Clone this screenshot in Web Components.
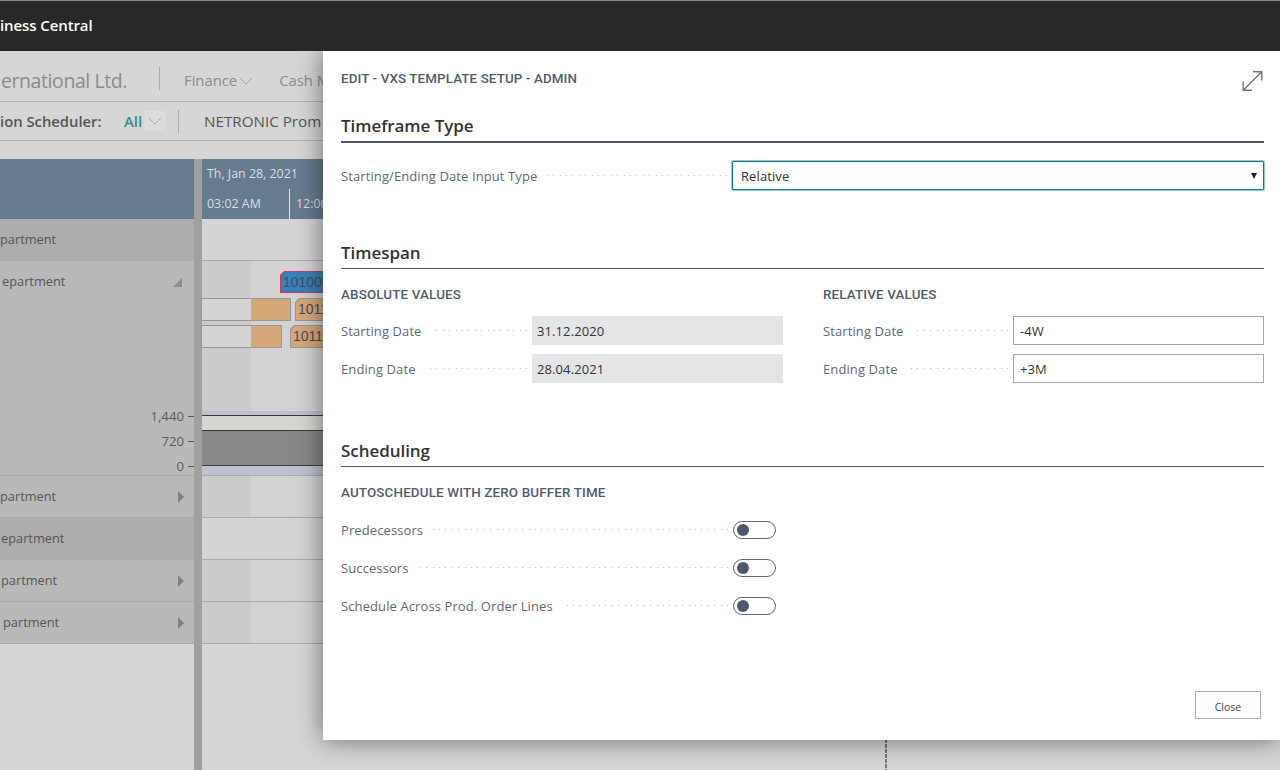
<!DOCTYPE html>
<html>
<head>
<meta charset="utf-8">
<title>VXS Template Setup</title>
<style>
	html, body {
		margin: 0;
		height: 100%;
		overflow: hidden;
		font-family: "Open Sans", "Noto Sans", sans-serif;
	}
</style>
</head>
<body>
<bc-shell>
	<bc-gantt>
		<gantt-row dark label="partment"></gantt-row>
		<gantt-row label="epartment" shift="2" chevron="open" height="215" shaded>
			<gantt-bar slot="bars" left="78" top="10" width="60" height="22" kind="blue" text="101000"></gantt-bar>
			<gantt-bar slot="bars" left="-1" top="37" width="90" height="23" kind="idle" split="49"></gantt-bar>
			<gantt-bar slot="bars" left="93" top="37" width="60" height="23" kind="orange" text="1011"></gantt-bar>
			<gantt-bar slot="bars" left="-1" top="64" width="81" height="23" kind="idle" split="49"></gantt-bar>
			<gantt-bar slot="bars" left="88" top="64" width="60" height="23" kind="orange" text="1011"></gantt-bar>
			<gantt-load slot="load"></gantt-load>
			<load-axis slot="axis"></load-axis>
		</gantt-row>
		<gantt-row label="partment" chevron="closed" shaded></gantt-row>
		<gantt-row dark label="epartment" shift="1"></gantt-row>
		<gantt-row label="partment" shift="1" chevron="closed" shaded></gantt-row>
		<gantt-row label="partment" shift="3" chevron="closed" shaded></gantt-row>
		<gantt-row filler></gantt-row>
	</bc-gantt>
</bc-shell>
<bc-dialog caption="EDIT - VXS TEMPLATE SETUP - ADMIN">
	<form-section title="Timeframe Type" focused>
		<form-field label="Starting/Ending Date Input Type" label-width="391" style="margin-top:18px">
			<bc-select value="Relative"></bc-select>
		</form-field>
	</form-section>
	<form-section title="Timespan" style="margin-top:48px">
		<field-columns>
			<field-group caption="ABSOLUTE VALUES" gap="11">
				<form-field label="Starting Date" label-width="191"><bc-input readonly value="31.12.2020"></bc-input></form-field>
				<form-field label="Ending Date" label-width="191"><bc-input readonly value="28.04.2021"></bc-input></form-field>
			</field-group>
			<field-group caption="RELATIVE VALUES" gap="11">
				<form-field label="Starting Date" label-width="190"><bc-input value="-4W"></bc-input></form-field>
				<form-field label="Ending Date" label-width="190"><bc-input value="+3M"></bc-input></form-field>
			</field-group>
		</field-columns>
	</form-section>
	<form-section title="Scheduling" style="margin-top:53px">
		<field-group caption="AUTOSCHEDULE WITH ZERO BUFFER TIME" gap="12">
			<form-field label="Predecessors" label-width="392"><bc-toggle></bc-toggle></form-field>
			<form-field label="Successors" label-width="392"><bc-toggle></bc-toggle></form-field>
			<form-field label="Schedule Across Prod. Order Lines" label-width="392"><bc-toggle></bc-toggle></form-field>
		</field-group>
	</form-section>
</bc-dialog>

<script>
const chevron = /*html*/`<svg width="14" height="8" viewBox="0 0 14 8" fill="none" stroke="currentColor" stroke-width="1"><path d="M1 1l6 6 6-6"/></svg>`

class BcShell extends HTMLElement {
	constructor() {
		super()
		this.attachShadow({mode:'open'})
		this.shadowRoot.innerHTML = /*html*/`
		<style>
			:host {
				display: flex;
				flex-direction: column;
				height: 770px;
				background: #d6d6d6;
				color: #555;
				overflow: hidden;
			}
			.top {
				height: 51px;
				box-sizing: border-box;
				flex: none;
				background: #282828;
				border-top: 1px solid #8c8c8c;
				color: #fff;
				font-weight: 600;
				font-size: 15px;
				letter-spacing: -0.1px;
				display: flex;
				align-items: center;
				padding-bottom: 2px;
			}
			.nav, .sub {
				flex: none;
				display: flex;
				align-items: center;
				box-sizing: border-box;
				border-bottom: 1px solid #b2b2b2;
			}
			.nav { height: 51px; color: #8b8b8b; font-size: 14.8px; padding-top: 8px; }
			.sub { height: 39px; font-size: 15.2px; color: #555; }
			.org { font-size: 19.5px; margin: 1px 0 0 1px; width: 158px; white-space: nowrap; letter-spacing: -0.42px; flex: none; }
			.bar { width: 1px; background: #adadad; flex: none; height: 23px; }
			.nav .bar { margin-top: -3px; }
			.sub .bar { margin-left: 12px; }
			.item { display: inline-flex; align-items: center; gap: 2px; white-space: nowrap; }
			.item svg { margin-top: 2px; color: #a8a8a8; }
			.sched { font-weight: 600; font-size: 14.8px; width: 124px; white-space: nowrap; flex: none; }
			.all { color: #2f8f8f; font-weight: 600; font-size: 14.8px; margin-right: 2px; }
			.pick { display: inline-flex; align-items: center; justify-content: center; width: 22px; height: 20px; background: #dcdcdc; color: #b0b0b0; }
			::slotted(*) { margin-top: 18px; }
		</style>
		<div class="top"><span>iness Central</span></div>
		<div class="nav">
			<span class="org">ernational Ltd.</span>
			<span class="bar"></span>
			<span class="item" style="margin-left:24px">Finance ${chevron}</span>
			<span class="item" style="margin-left:26px">Cash M</span>
		</div>
		<div class="sub">
			<span class="sched">ion Scheduler:</span>
			<span class="all">All</span>
			<span class="pick">${chevron}</span>
			<span class="bar"></span>
			<span class="item" style="margin-left:25px">NETRONIC Prom</span>
		</div>
		<slot></slot>`
	}
}

class BcGantt extends HTMLElement {
	constructor() {
		super()
		this.attachShadow({mode:'open'})
		this.shadowRoot.innerHTML = /*html*/`
		<style>
			:host {
				display: flex;
				flex-direction: column;
				flex: 1;
				min-height: 0;
			}
			.head {
				height: 60px;
				flex: none;
				display: grid;
				grid-template-columns: 194px 8px 1fr;
				background: #657b90;
				color: #d9dfe4;
				font-size: 12.4px;
			}
			.split { background: #a0a0a0; }
			.time { display: flex; flex-direction: column; }
			.date { height: 30px; line-height: 29px; padding-left: 5px; }
			.ticks { display: flex; height: 30px; line-height: 29px; }
			.ticks span { width: 88px; padding-left: 5px; box-sizing: border-box; border-right: 1px solid #dfe4e8; }
			.ticks span + span { border: 0; padding-left: 6px; }
		</style>
		<div class="head">
			<div></div><div class="split"></div>
			<div class="time">
				<div class="date">Th, Jan 28, 2021</div>
				<div class="ticks"><span>03:02 AM</span><span>12:00</span></div>
			</div>
		</div>
		<slot></slot>`
	}
}

class GanttRow extends HTMLElement {
	constructor() {
		super()
		this.attachShadow({mode:'open'})
		const open = this.getAttribute('chevron') === 'open'
		const closed = this.getAttribute('chevron') === 'closed'
		this.shadowRoot.innerHTML = /*html*/`
		<style>
			:host {
				display: grid;
				grid-template-columns: 194px 8px 1fr;
				height: ${this.getAttribute('height') || 42}px;
				flex: none;
				box-sizing: border-box;
				font-size: 12.8px;
				color: #555;
			}
			:host([filler]) { flex: 1; height: auto; }
			.left {
				background: #b9b9b9;
				border-bottom: 1px solid #a9a9a9;
				box-sizing: border-box;
				position: relative;
				display: flex;
				flex-direction: column;
			}
			:host([dark]) .left { background: #adadad; border-color: #adadad; }
			:host([filler]) .left { background: #d6d6d6; border: 0; }
			:host([filler]) .right {
				border: 0;
				background: repeating-linear-gradient(180deg, #777 0 4px, transparent 4px 5px) 683px 0 / 2px 100% no-repeat, #d6d6d6;
			}
			.line { height: 41px; flex: none; display: flex; align-items: center; justify-content: space-between; padding-right: 9px; white-space: nowrap; }
			.line span { margin: -2px 0 0 ${this.getAttribute('shift') || 0}px; }
			.split { background: #a0a0a0; }
			.right {
				background: #d4d4d4;
				border-bottom: 1px solid #a9a9a9;
				box-sizing: border-box;
				display: flex;
				flex-direction: column;
				position: relative;
			}
			:host([shaded]) .right { background: linear-gradient(90deg, #cbcbcb 49px, #d3d3d3 49px); }
			.bars { flex: 1; position: relative; }
			.axis { margin-top: auto; }
		</style>
		<div class="left">
			${this.hasAttribute('filler') ? '' : /*html*/`<div class="line">
				<span>${this.getAttribute('label')}</span>
				${closed ? `<svg width="8" height="12" viewBox="0 0 8 12"><path d="M1 0l6 6-6 6z" fill="#808080"/></svg>` : ''}
				${open ? `<svg width="12" height="12" viewBox="0 0 12 12" style="margin-right:1px"><path d="M10 2v9H1z" fill="#8c8c8c"/></svg>` : ''}
			</div>`}
			<div class="axis"><slot name="axis"></slot></div>
		</div>
		<div class="split"></div>
		<div class="right">
			<div class="bars"><slot name="bars"></slot></div>
			<slot name="load"></slot>
		</div>`
	}
}

class GanttBar extends HTMLElement {
	constructor() {
		super()
		this.attachShadow({mode:'open'})
		const get = n => this.getAttribute(n)
		const kind = get('kind')
		const split = get('split')
		const fill = {blue:'#3483bd', orange:'#d6a878', idle:'#d3d3d3'}[kind]
		const edge = {blue:'#d8344a', orange:'#979797', idle:'#979797'}[kind]
		const cut = kind === 'idle' ? 'none' : 'polygon(4px 0, 100% 0, 100% 100%, 0 100%, 0 4px)'
		this.shadowRoot.innerHTML = /*html*/`
		<style>
			:host {
				position: absolute;
				left: ${get('left')}px;
				top: ${get('top')}px;
				width: ${get('width')}px;
				height: ${get('height')}px;
				box-sizing: border-box;
				clip-path: ${cut};
				background: ${edge};
				padding: 1px;
				font: 14px "Liberation Sans", sans-serif;
				color: #4f4a55;
			}
			div {
				height: 100%;
				box-sizing: border-box;
				padding-left: 2px;
				line-height: 20px;
				clip-path: ${cut};
				white-space: nowrap;
				overflow: hidden;
				background: ${split ? `linear-gradient(90deg, ${fill} ${split}px, #d6a878 ${split}px)` : fill};
			}
		</style>
		<div>${get('text') || ''}</div>`
	}
}

class GanttLoad extends HTMLElement {
	constructor() {
		super()
		this.attachShadow({mode:'open'})
		this.shadowRoot.innerHTML = /*html*/`
		<style>
			:host { display: flex; flex-direction: column; height: 64px; flex: none; background: #bcc3cf; }
			.gap { height: 4px; }
			.free { height: 15px; background: #d5d7d0; border-top: 1px solid #3a3a3a; box-sizing: border-box; }
			.used { height: 36px; background: #888; border-top: 1px solid #3a3a3a; border-bottom: 1px solid #3a3a3a; box-sizing: border-box; }
		</style>
		<div class="gap"></div><div class="free"></div><div class="used"></div>`
	}
}

class LoadAxis extends HTMLElement {
	constructor() {
		super()
		this.attachShadow({mode:'open'})
		this.shadowRoot.innerHTML = /*html*/`
		<style>
			:host { display: flex; flex-direction: column; align-items: flex-end; height: 71px; font-size: 13.2px; color: #5c5c5c; }
			div { height: 25px; line-height: 25px; white-space: nowrap; }
			div::after { content: ''; display: inline-block; width: 6px; height: 1px; background: #555; margin-left: 4px; vertical-align: 4px; }
		</style>
		<div>1,440</div><div>720</div><div>0</div>`
	}
}

class BcDialog extends HTMLElement {
	constructor() {
		super()
		this.attachShadow({mode:'open'})
		this.shadowRoot.innerHTML = /*html*/`
		<style>
			:host {
				position: absolute;
				left: 323px;
				top: 51px;
				width: 957px;
				height: 689px;
				box-sizing: border-box;
				background: #fff;
				box-shadow: 0 0 24px rgba(0,0,0,.5);
				display: flex;
				flex-direction: column;
				padding: 0 16px 21px 18px;
				clip-path: inset(0 0 -40px -40px);
			}
			.head {
				height: 60px;
				flex: none;
				display: flex;
				justify-content: space-between;
				align-items: flex-start;
				padding-top: 19px;
				box-sizing: border-box;
			}
			.caption {
				font-family: Roboto, sans-serif;
				font-size: 13.4px;
				font-weight: 500;
				line-height: 18px;
				color: #505c6d;
				letter-spacing: .1px;
			}
			.foot { margin-top: auto; display: flex; justify-content: flex-end; padding-right: 3px; }
			button {
				all: unset;
				width: 66px;
				height: 28px;
				box-sizing: border-box;
				border: 1px solid #ababab;
				background: #fdfdfd;
				text-align: center;
				font: 10.5px "Open Sans", sans-serif;
				line-height: 28px;
				padding-top: 1px;
				color: #444;
			}
		</style>
		<div class="head">
			<span class="caption">${this.getAttribute('caption')}</span>
			<svg width="22" height="22" viewBox="0 0 22 22" fill="none" stroke="#747474" stroke-width="1.4">
				<path d="M1 20.500L19.500 2M11 1.700H19.800V10.500M1.200 11.500V20.300H10"/>
			</svg>
		</div>
		<slot></slot>
		<div class="foot"><button>Close</button></div>`
	}
}

class FormSection extends HTMLElement {
	constructor() {
		super()
		this.attachShadow({mode:'open'})
		this.shadowRoot.innerHTML = /*html*/`
		<style>
			:host { display: block; flex: none; }
			h2 {
				margin: 0;
				height: 30px;
				font-size: 17px;
				font-weight: 600;
				letter-spacing: -.05px;
				line-height: 30px;
				color: #333;
				border-bottom: 1px solid #4d586a;
			}
			:host([focused]) h2 { border-bottom-width: 2px; }
		</style>
		<h2>${this.getAttribute('title')}</h2>
		<slot></slot>`
	}
}

class FieldColumns extends HTMLElement {
	constructor() {
		super()
		this.attachShadow({mode:'open'})
		this.shadowRoot.innerHTML = /*html*/`
		<style>
			:host { display: grid; grid-template-columns: 442px 441px; column-gap: 40px; }
		</style>
		<slot></slot>`
	}
}

class FieldGroup extends HTMLElement {
	constructor() {
		super()
		this.attachShadow({mode:'open'})
		this.shadowRoot.innerHTML = /*html*/`
		<style>
			:host { display: block; }
			h3 {
				margin: 16px 0 ${this.getAttribute('gap') || 12}px;
				height: 20px;
				font-family: Roboto, sans-serif;
				font-size: 13.4px;
				font-weight: 500;
				line-height: 20px;
				letter-spacing: .15px;
				color: #505c6d;
			}
			.rows { display: flex; flex-direction: column; gap: 9px; }
		</style>
		<h3>${this.getAttribute('caption')}</h3>
		<div class="rows"><slot></slot></div>`
	}
}

class FormField extends HTMLElement {
	constructor() {
		super()
		this.attachShadow({mode:'open'})
		this.shadowRoot.innerHTML = /*html*/`
		<style>
			:host { display: flex; align-items: center; height: 29px; font-size: 13px; letter-spacing: .1px; color: #5f6873; }
			.label {
				width: ${this.getAttribute('label-width')}px;
				flex: none;
				display: flex;
				align-items: center;
				gap: 9px;
				padding: 0 5px 0 0;
				box-sizing: border-box;
				white-space: nowrap;
			}
			.dots {
				flex: 1;
				height: 1px;
				background: repeating-linear-gradient(270deg, #b8bcc2 0 1px, transparent 1px 6.4px);
			}
			.value { flex: 1; min-width: 0; }
		</style>
		<div class="label"><span>${this.getAttribute('label')}</span><span class="dots"></span></div>
		<div class="value"><slot></slot></div>`
	}
}

class BcSelect extends HTMLElement {
	constructor() {
		super()
		this.attachShadow({mode:'open'})
		this.shadowRoot.innerHTML = /*html*/`
		<style>
			:host {
				display: flex;
				align-items: center;
				justify-content: space-between;
				height: 29px;
				box-sizing: border-box;
				border: 1px solid #0a7f80;
				box-shadow: 0 0 0 1px #8fcfcf;
				border-radius: 1px;
				padding: 0 6px 0 8px;
				font-size: 13px;
				color: #333;
			}
		</style>
		<span>${this.getAttribute('value')}</span>
		<svg width="6" height="6" viewBox="0 0 6 6"><path d="M0 0h6L3 6z" fill="#222"/></svg>`
	}
}

class BcInput extends HTMLElement {
	constructor() {
		super()
		this.attachShadow({mode:'open'})
		this.shadowRoot.innerHTML = /*html*/`
		<style>
			:host {
				display: flex;
				align-items: center;
				height: 29px;
				box-sizing: border-box;
				border: 1px solid #a6a6a6;
				padding: 0 8px 0 6px;
				font-size: 13px;
				color: #333;
			}
			:host([readonly]) { background: #e4e5e7; border-color: #e4e5e7; padding-left: 4px; }
		</style>
		<span>${this.getAttribute('value')}</span>`
	}
}

class BcToggle extends HTMLElement {
	constructor() {
		super()
		this.attachShadow({mode:'open'})
		this.shadowRoot.innerHTML = /*html*/`
		<style>
			:host {
				display: flex;
				align-items: center;
				width: 43px;
				height: 18px;
				box-sizing: border-box;
				border: 1px solid #5d6778;
				border-radius: 9px;
				padding-left: 3px;
			}
			i { width: 12px; height: 12px; border-radius: 50%; background: #4d586e; }
		</style>
		<i></i>`
	}
}

customElements.define('bc-shell', BcShell)
customElements.define('bc-gantt', BcGantt)
customElements.define('gantt-row', GanttRow)
customElements.define('gantt-bar', GanttBar)
customElements.define('gantt-load', GanttLoad)
customElements.define('load-axis', LoadAxis)
customElements.define('bc-dialog', BcDialog)
customElements.define('form-section', FormSection)
customElements.define('field-columns', FieldColumns)
customElements.define('field-group', FieldGroup)
customElements.define('form-field', FormField)
customElements.define('bc-select', BcSelect)
customElements.define('bc-input', BcInput)
customElements.define('bc-toggle', BcToggle)
</script>
</body>
</html>
